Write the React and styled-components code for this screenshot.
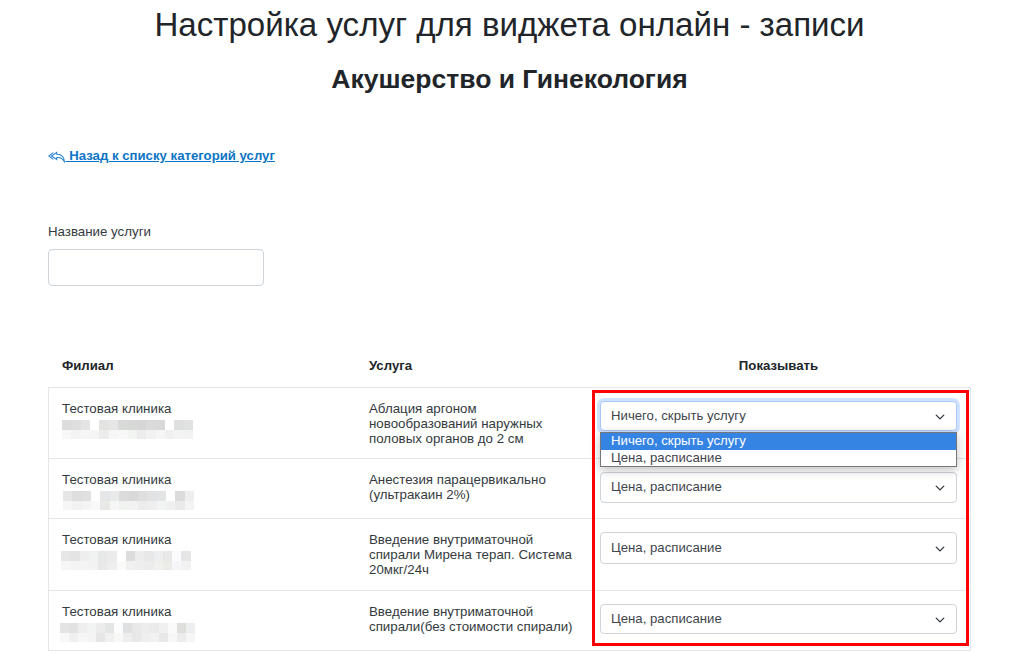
import React from "react";
import styled, {createGlobalStyle} from "styled-components";

const GlobalStyle = createGlobalStyle`
  html, body {
    margin: 0;
    height: 653px;
    overflow: hidden;
    background: #fff;
    font-family: "Liberation Sans", Arial, sans-serif;
    color: #212529;
  }
`;

const rows = [
    {
        height: 71,
        selectHeight: 30,
        service: ["Аблация аргоном", "новообразований наружных", "половых органов до 2 см"],
        value: "Ничего, скрыть услугу",
        open: true,
        blur: {
            shift: 0,
            size: 9.36,
            top: ["#dcdcdc", "#dedede", "#e4e4e4", "#fff", "#e2e4e2", "#e6e6e6", "#d8dad8", "#d6d8d6", "#d6d6d6", "#dadada", "#d8dad8", "#fff", "#dde0de", "#dfe2e0"],
            bottom: ["#f8f8f8", "#f4f4f4", "#f6f6f6", "#f5f5f5", "#ececea", "#f6f6f6", "#f8f8f8", "#f2f4f2", "#ececec", "#f2f2f2", "#f6f6f6", "#f0f0f0", "#f4f4f4", "#f2f2f2"]
        }
    },
    {
        height: 60,
        selectHeight: 31,
        service: ["Анестезия парацервикально", "(ультракаин 2%)"],
        value: "Цена, расписание",
        blur: {
            shift: 1,
            size: 9.36,
            top: ["#e6e6e6", "#dedede", "#e0e0e0", "#fff", "#e4e6e8", "#e8eaec", "#dcdcdc", "#d8d8d8", "#dedede", "#e0e2e4", "#e2e4e6", "#fff", "#dcdcdc", "#eceef0"],
            bottom: ["#f6f6f6", "#f2f2f2", "#f4f4f4", "#f8f8f8", "#e8e8e6", "#f6f6f6", "#f0f2f0", "#f2f2f2", "#ececec", "#eeeeee", "#f2f4f4", "#f0f0f0", "#eaeaea", "#f4f4f4"]
        }
    },
    {
        height: 72,
        selectHeight: 32,
        service: ["Введение внутриматочной", "спирали Мирена терап. Система", "20мкг/24ч"],
        value: "Цена, расписание",
        blur: {
            shift: -1,
            size: 9.28,
            top: ["#e6e6e6", "#e4e4e4", "#eeeeee", "#f0f2f2", "#e6e8e8", "#ebebeb", "#fff", "#dcdcdc", "#ececec", "#e8e8e8", "#eceef0", "#e8e8e8", "#fbfbfd", "#e6e6e6"],
            bottom: ["#f6f6f6", "#f4f4f4", "#f4f4f4", "#f2f2f2", "#e8e8e8", "#eeeeee", "#fafaf8", "#f0f0f0", "#eeeeee", "#ececec", "#f0f0ec", "#ebebe8", "#f4f6f8", "#f2f2f2"]
        }
    },
    {
        height: 61,
        selectHeight: 30,
        service: ["Введение внутриматочной", "спирали(без стоимости спирали)"],
        value: "Цена, расписание",
        blur: {
            shift: -2,
            size: 9,
            top: ["#e4e4e4", "#e2e2e2", "#eeeeee", "#f2f4f4", "#ececec", "#e4e6e6", "#fdfdfd", "#dee0e2", "#e8e8e8", "#ececec", "#eaeaea", "#f0f0f0", "#fafafa", "#dededc", "#eceef0"],
            bottom: ["#f8f8f8", "#f0f0f0", "#f6f6f6", "#f4f4f4", "#e6e6e6", "#f0f0f0", "#f8f8f6", "#eeeeee", "#e8e8e8", "#eeeeee", "#f2f2f2", "#e8e8e8", "#f6f6f6", "#ececec", "#f6f6f6"]
        }
    }
];

function BackIcon() {
    return (
        <svg width="17.5" height="12" viewBox="0 0 18 12" fill="none" stroke="#2a83cc" strokeWidth="1.1">
            <path d="M5.5 1.5 L0.8 5 L5.5 8.5"/>
            <path d="M9 1.2 L3.6 5 L9 8.6 V6.6 C12.5 6 15 7.2 16.8 10.8 C17 6.4 14 3 9 3.2 Z"/>
        </svg>
    );
}

function Chevron() {
    return (
        <ChevronIcon width="10" height="10" viewBox="0 0 16 16" fill="none" stroke="#343a40" strokeWidth="2.2" strokeLinecap="round" strokeLinejoin="round">
            <path d="M2 5l6 6 6-6"/>
        </ChevronIcon>
    );
}

function Blurred({blur}) {
    return (
        <BlurBox $shift={blur.shift}>
            <BlurLine>{blur.top.map((c, i) => <BlurCell key={i} $color={c} $size={blur.size}/>)}</BlurLine>
            <BlurLine>{blur.bottom.map((c, i) => <BlurCell key={i} $color={c} $size={blur.size}/>)}</BlurLine>
        </BlurBox>
    );
}

export default function App() {
    return (
        <Page>
            <GlobalStyle/>
            <Title>Настройка услуг для виджета онлайн - записи</Title>
            <SubTitle>Акушерство и Гинекология</SubTitle>
            <BackLink href="#"><BackIcon/> Назад к списку категорий услуг</BackLink>
            <FilterLabel>Название услуги</FilterLabel>
            <FilterInput/>
            <Table>
                <HeadRow>
                    <HeadCell>Филиал</HeadCell>
                    <HeadCell>Услуга</HeadCell>
                    <HeadCell $center>Показывать</HeadCell>
                </HeadRow>
                {rows.map((row, i) => (
                    <Row key={i} $height={row.height}>
                        <Cell>
                            Тестовая клиника
                            <Blurred blur={row.blur}/>
                        </Cell>
                        <Cell>{row.service.map((line, j) => <div key={j}>{line}</div>)}</Cell>
                        <SelectCell>
                            <SelectBox $focused={row.open} $height={row.selectHeight}>
                                {row.value}
                                <Chevron/>
                            </SelectBox>
                            {row.open && (
                                <Menu>
                                    <MenuItem $active>Ничего, скрыть услугу</MenuItem>
                                    <MenuItem>Цена, расписание</MenuItem>
                                </Menu>
                            )}
                        </SelectCell>
                    </Row>
                ))}
                <Highlight/>
            </Table>
        </Page>
    );
}

const Page = styled.div`
  padding: 0 53px 0 48px;
  height: 653px;
  box-sizing: border-box;
`;
const Title = styled.h1`
  margin: 0;
  padding-top: 6px;
  font-size: 33.1px;
  line-height: 38px;
  font-weight: 400;
  text-align: center;
`;
const SubTitle = styled.h2`
  margin: 19px 0 0;
  font-size: 26.5px;
  line-height: 32px;
  font-weight: 700;
  text-align: center;
`;
const BackLink = styled.a`
  display: block;
  margin-top: 53px;
  font-size: 13.2px;
  line-height: 16px;
  font-weight: 700;
  color: #0d74c5;
  svg {
    vertical-align: -3px;
  }
`;
const FilterLabel = styled.div`
  margin-top: 60px;
  font-size: 13.3px;
  line-height: 16px;
  color: #343a40;
`;
const FilterInput = styled.input`
  display: block;
  box-sizing: border-box;
  width: 216px;
  height: 37px;
  margin-top: 9px;
  border: 1px solid #ced4da;
  border-radius: 4px;
  background: #fff;
`;
const Table = styled.div`
  position: relative;
  margin-top: 62px;
`;
const HeadRow = styled.div`
  display: grid;
  grid-template-columns: 307px 231px 385px;
  height: 39px;
`;
const HeadCell = styled.div`
  padding: 10px 14px 0;
  font-size: 13.2px;
  line-height: 16px;
  font-weight: 700;
  text-align: ${props => props.$center ? "center" : "left"};
`;
const Row = styled.div`
  display: grid;
  grid-template-columns: 307px 231px 385px;
  box-sizing: border-box;
  height: ${props => props.$height}px;
  border-top: 1px solid #e4e7ea;
  border-left: 1px solid #e4e7ea;
  border-right: 1px solid #e4e7ea;
  &:nth-last-child(2) {
    border-bottom: 1px solid #e4e7ea;
  }
`;
const Cell = styled.div`
  padding: 13px 13px 0;
  font-size: 13.3px;
  line-height: 15px;
  color: #343a40;
  &:nth-child(2) {
    padding-left: 13px;
    padding-right: 0;
  }
`;
const BlurBox = styled.div`
  display: flex;
  flex-direction: column;
  margin-top: 4px;
  margin-left: ${props => props.$shift}px;
`;
const BlurLine = styled.div`
  display: flex;
  height: 9.5px;
`;
const BlurCell = styled.span`
  width: ${props => props.$size}px;
  height: 9.5px;
  background: ${props => props.$color};
`;
const SelectCell = styled.div`
  position: relative;
  padding: 13px 15px 0 13px;
`;
const SelectBox = styled.div`
  display: flex;
  align-items: center;
  justify-content: space-between;
  box-sizing: border-box;
  height: ${props => props.$height}px;
  padding: 0 11px 2px 10px;
  border: 1px solid ${props => props.$focused ? "#a6c8fa" : "#ced4da"};
  border-radius: 4px;
  background: #fff;
  font-size: 13.2px;
  color: #3f454b;
  box-shadow: ${props => props.$focused ? "0 0 0 3px rgba(13, 110, 253, .2)" : "none"};
`;
const ChevronIcon = styled.svg`
  margin-top: 3px;
`;
const Menu = styled.div`
  position: absolute;
  z-index: 2;
  top: 44px;
  left: 13px;
  right: 15px;
  box-sizing: border-box;
  border: 1px solid #767676;
  background: #fff;
  box-shadow: 0 3px 10px rgba(0, 0, 0, .25);
`;
const MenuItem = styled.div`
  padding-left: 10px;
  height: ${props => props.$active ? 17 : 16}px;
  font-size: 13.2px;
  line-height: 15px;
  background: ${props => props.$active ? "#3584e4" : "#fff"};
  color: ${props => props.$active ? "#fff" : "#3f454b"};
`;
const Highlight = styled.div`
  position: absolute;
  z-index: 3;
  top: 42px;
  left: 544px;
  width: 377px;
  height: 256px;
  box-sizing: border-box;
  border: 3px solid #f00;
  pointer-events: none;
`;
